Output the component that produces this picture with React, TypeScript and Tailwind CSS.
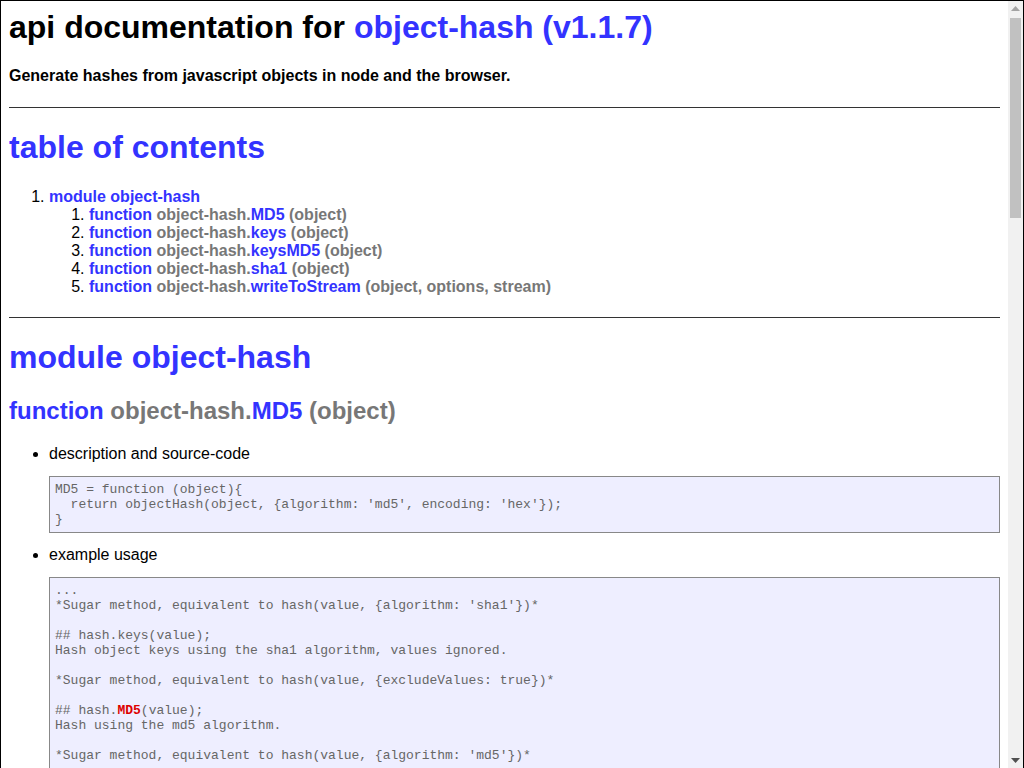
import React from "react";

const B = "text-[#3333ff]";
const G = "text-[#777777]";

function Fn({ name, args }: { name: string; args: string }) {
  return (
    <>
      <span className={B}>function</span> <span className={G}>object-hash.</span>
      <span className={B}>{name}</span> <span className={G}>{args}</span>
    </>
  );
}

const example = [
  "...",
  "*Sugar method, equivalent to hash(value, {algorithm: 'sha1'})*",
  "",
  "## hash.keys(value);",
  "Hash object keys using the sha1 algorithm, values ignored.",
  "",
  "*Sugar method, equivalent to hash(value, {excludeValues: true})*",
  "",
  "__MD5__",
  "Hash using the md5 algorithm.",
  "",
  "*Sugar method, equivalent to hash(value, {algorithm: 'md5'})*",
  "",
  "",
  "",
];

export default function App() {
  return (
    <div
      className="w-[1024px] h-[768px] overflow-hidden flex border-l border-t border-r border-black bg-white text-black"
      style={{ fontFamily: '"Liberation Sans", Arial, sans-serif' }}
    >
      <div className="flex-1 min-w-0 overflow-hidden px-[8px] pt-[8px]">
        <h1 className="text-[32px] font-bold leading-[37px]">
          api documentation for <span className={B}>object-hash (v1.1.7)</span>
        </h1>
        <div className="mt-[21px] text-[16px] font-bold leading-[18px]">
          Generate hashes from javascript objects in node and the browser.
        </div>
        <hr className="mt-[22px] border-0 border-t border-[#333333]" />
        <h2 className={`mt-[21px] text-[32px] font-bold leading-[37px] ${B}`}>table of contents</h2>
        <ol className="mt-[22px] list-decimal pl-[40px] text-[16px] leading-[18px]">
          <li>
            <span className={`font-bold ${B}`}>module object-hash</span>
            <ol className="list-decimal pl-[40px]">
              <li><span className="font-bold"><Fn name="MD5" args="(object)" /></span></li>
              <li><span className="font-bold"><Fn name="keys" args="(object)" /></span></li>
              <li><span className="font-bold"><Fn name="keysMD5" args="(object)" /></span></li>
              <li><span className="font-bold"><Fn name="sha1" args="(object)" /></span></li>
              <li><span className="font-bold"><Fn name="writeToStream" args="(object, options, stream)" /></span></li>
            </ol>
          </li>
        </ol>
        <hr className="mt-[21px] border-0 border-t border-[#333333]" />
        <h2 className={`mt-[21px] text-[32px] font-bold leading-[37px] ${B}`}>module object-hash</h2>
        <h3 className="mt-[21px] text-[24px] font-bold leading-[28px]">
          <Fn name="MD5" args="(object)" />
        </h3>
        <ul className="mt-[20px] list-disc pl-[40px] text-[16px] leading-[18px]">
          <li>
            description and source-code
            <pre
              className="mt-[13px] border border-[#888888] bg-[#eeeeff] p-[5px] text-[13px] leading-[15px] text-[#666666] whitespace-pre overflow-hidden"
              style={{ fontFamily: '"Liberation Mono", "Courier New", monospace' }}
            >
{`MD5 = function (object){
  return objectHash(object, {algorithm: 'md5', encoding: 'hex'});
}`}
            </pre>
          </li>
          <li className="mt-[13px]">
            example usage
            <pre
              className="mt-[13px] border border-[#888888] bg-[#eeeeff] p-[5px] text-[13px] leading-[15px] text-[#666666] whitespace-pre overflow-hidden"
              style={{ fontFamily: '"Liberation Mono", "Courier New", monospace' }}
            >
              {example.map((l, i) =>
                l === "__MD5__" ? (
                  <div key={i}>
                    ## hash.<span className="font-bold text-[#dd0000]">MD5</span>(value);
                  </div>
                ) : (
                  <div key={i}>{l === "" ? "\u00a0" : l}</div>
                )
              )}
            </pre>
          </li>
        </ul>
      </div>
      <div className="w-[15px] shrink-0 bg-[#f1f1f1] flex flex-col items-center">
        <div className="h-[15px] flex items-center justify-center">
          <svg width="9" height="5" viewBox="0 0 9 5"><polygon points="0,5 9,5 4.5,0" fill="#a3a3a3" /></svg>
        </div>
        <div className="w-[11px] h-[200px] bg-[#c1c1c1] mt-[2px]" />
        <div className="flex-1" />
        <div className="h-[15px] flex items-center justify-center">
          <svg width="9" height="5" viewBox="0 0 9 5"><polygon points="0,0 9,0 4.5,5" fill="#505050" /></svg>
        </div>
      </div>
    </div>
  );
}
